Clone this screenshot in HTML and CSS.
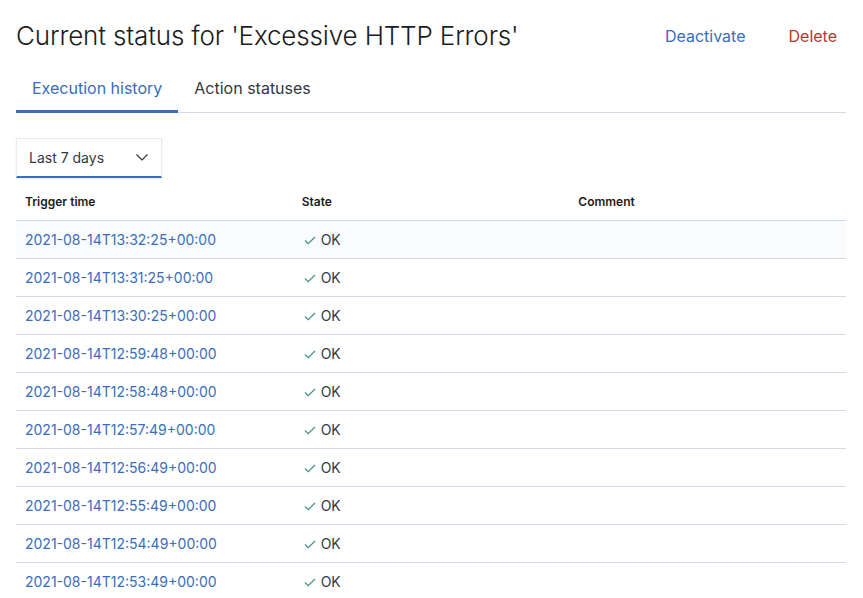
FILE: index.html
```html
<!DOCTYPE html>
<html>
<head>
<meta charset="utf-8">
<link rel="stylesheet" href="styles.css">
</head>
<body>
<div class="page">
  <div class="header">
    <h1 class="title">Current status for 'Excessive HTTP Errors'</h1>
    <div class="actions">
      <a class="action">Deactivate</a>
      <a class="action danger">Delete</a>
    </div>
  </div>
  <div class="tabs">
    <div class="tab selected">Execution history</div>
    <div class="tab">Action statuses</div>
  </div>
  <div class="select">
    <span>Last 7 days</span>
    <svg class="chev" width="16" height="16" viewBox="0 0 16 16"><path d="M2.5 5.5 L8 11 L13.5 5.5" fill="none" stroke="#343741" stroke-width="1.2"/></svg>
  </div>
  <table class="table">
    <thead>
      <tr><th>Trigger time</th><th>State</th><th>Comment</th></tr>
    </thead>
    <tbody>
      <tr class="hover"><td><a>2021-08-14T13:32:25+00:00</a></td><td class="state"><svg width="16" height="16" viewBox="0 0 16 16"><path d="M3 8.5 L6.2 11.7 L13 5" fill="none" stroke="#3b8f7e" stroke-width="1.1"/></svg>OK</td><td></td></tr>
      <tr><td><a>2021-08-14T13:31:25+00:00</a></td><td class="state"><svg width="16" height="16" viewBox="0 0 16 16"><path d="M3 8.5 L6.2 11.7 L13 5" fill="none" stroke="#3b8f7e" stroke-width="1.1"/></svg>OK</td><td></td></tr>
      <tr><td><a>2021-08-14T13:30:25+00:00</a></td><td class="state"><svg width="16" height="16" viewBox="0 0 16 16"><path d="M3 8.5 L6.2 11.7 L13 5" fill="none" stroke="#3b8f7e" stroke-width="1.1"/></svg>OK</td><td></td></tr>
      <tr><td><a>2021-08-14T12:59:48+00:00</a></td><td class="state"><svg width="16" height="16" viewBox="0 0 16 16"><path d="M3 8.5 L6.2 11.7 L13 5" fill="none" stroke="#3b8f7e" stroke-width="1.1"/></svg>OK</td><td></td></tr>
      <tr><td><a>2021-08-14T12:58:48+00:00</a></td><td class="state"><svg width="16" height="16" viewBox="0 0 16 16"><path d="M3 8.5 L6.2 11.7 L13 5" fill="none" stroke="#3b8f7e" stroke-width="1.1"/></svg>OK</td><td></td></tr>
      <tr><td><a>2021-08-14T12:57:49+00:00</a></td><td class="state"><svg width="16" height="16" viewBox="0 0 16 16"><path d="M3 8.5 L6.2 11.7 L13 5" fill="none" stroke="#3b8f7e" stroke-width="1.1"/></svg>OK</td><td></td></tr>
      <tr><td><a>2021-08-14T12:56:49+00:00</a></td><td class="state"><svg width="16" height="16" viewBox="0 0 16 16"><path d="M3 8.5 L6.2 11.7 L13 5" fill="none" stroke="#3b8f7e" stroke-width="1.1"/></svg>OK</td><td></td></tr>
      <tr><td><a>2021-08-14T12:55:49+00:00</a></td><td class="state"><svg width="16" height="16" viewBox="0 0 16 16"><path d="M3 8.5 L6.2 11.7 L13 5" fill="none" stroke="#3b8f7e" stroke-width="1.1"/></svg>OK</td><td></td></tr>
      <tr><td><a>2021-08-14T12:54:49+00:00</a></td><td class="state"><svg width="16" height="16" viewBox="0 0 16 16"><path d="M3 8.5 L6.2 11.7 L13 5" fill="none" stroke="#3b8f7e" stroke-width="1.1"/></svg>OK</td><td></td></tr>
      <tr><td><a>2021-08-14T12:53:49+00:00</a></td><td class="state"><svg width="16" height="16" viewBox="0 0 16 16"><path d="M3 8.5 L6.2 11.7 L13 5" fill="none" stroke="#3b8f7e" stroke-width="1.1"/></svg>OK</td><td></td></tr>
    </tbody>
  </table>
</div>
</body>
</html>
```

FILE: styles.css
```css
* { box-sizing: border-box; }
html, body { margin: 0; padding: 0; background: #fff; }
body { font-family: Inter, "Noto Sans", sans-serif; color: #343741; }
.page { padding: 16px 17px 0 16px; }
.header { display: flex; align-items: flex-start; justify-content: space-between; height: 40px; }
.title { margin: 0; font-size: 26px; font-weight: 300; line-height: 40px; color: #1a1c21; letter-spacing: -0.15px; }
.actions { display: flex; gap: 43px; padding-top: 8px; padding-right: 9px; }
.action { font-size: 16px; line-height: 24px; color: #3a6dba; }
.action.danger { color: #b33a30; }
.tabs { display: flex; margin-top: 8px; border-bottom: 1px solid #d3dae6; }
.tab { font-size: 16px; line-height: 24px; padding: 12px 16px 10px; color: #343741; border-bottom: 3px solid transparent; margin-bottom: -1px; }
.tab.selected { color: #3a6dba; border-bottom-color: #3b6ebc; }
.select { margin-top: 25px; width: 146px; height: 40px; display: flex; align-items: center; justify-content: space-between; padding: 0 11px 0 12px; font-size: 14px; color: #343741; border: 1px solid #e6eaf2; border-bottom: 2px solid #3b6ebc; box-shadow: 0 1px 2px rgba(0,0,0,0.08); }
.chev { margin-top: -2px; }
.table { width: 100%; border-collapse: collapse; table-layout: fixed; margin-top: 5px; }
.table th { text-align: left; font-size: 12px; font-weight: 600; color: #1a1c21; height: 37px; padding: 0 8px 0 9px; border-bottom: 1px solid #d3dae6; }
.table td { height: 38px; padding: 0 8px 0 9px; font-size: 14px; border-bottom: 1px solid #d3dae6; }
.table tr.hover td { background: #fafbfd; }
.table tbody tr:last-child td { border-bottom: none; }
.table a { color: #3a6dba; }
.state svg { vertical-align: -3px; margin-right: 3px; margin-left: 0; }
```
